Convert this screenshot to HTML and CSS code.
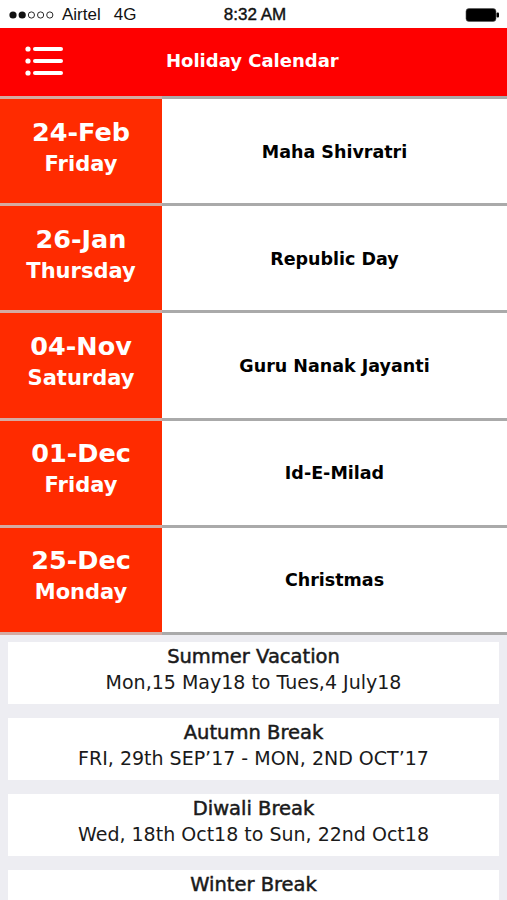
FILE: index.html
```html
<!DOCTYPE html>
<html>
<head>
<meta charset="utf-8">
<link rel="stylesheet" href="styles.css">
</head>
<body>
<div class="status">
  <div class="status-left">
    <svg class="signal" width="48" height="10" viewBox="0 0 48 10">
      <circle cx="4" cy="5" r="3.6" fill="#111"/>
      <circle cx="13.2" cy="5" r="3.6" fill="#111"/>
      <circle cx="22.4" cy="5" r="3.1" fill="none" stroke="#111" stroke-width="0.9"/>
      <circle cx="31.6" cy="5" r="3.1" fill="none" stroke="#111" stroke-width="0.9"/>
      <circle cx="40.8" cy="5" r="3.1" fill="none" stroke="#111" stroke-width="0.9"/>
    </svg>
    <span class="carrier">Airtel</span><span class="net">4G</span>
  </div>
  <div class="status-time">8:32 AM</div>
  <div class="status-right">
    <svg width="36" height="16" viewBox="0 0 36 16"><rect x="1" y="1.5" width="30" height="13" rx="3" fill="#000" stroke="#555" stroke-width="0.6"/><rect x="31.5" y="5.5" width="2.5" height="5" rx="1" fill="#000"/></svg>
  </div>
</div>
<header class="topbar">
  <svg class="menu" width="40" height="32" viewBox="0 0 40 32">
    <circle cx="3" cy="4" r="2.6" fill="#fff"/>
    <circle cx="3" cy="16" r="2.6" fill="#fff"/>
    <circle cx="3" cy="28" r="2.6" fill="#fff"/>
    <rect x="8" y="2" width="30" height="4" rx="2" fill="#fff"/>
    <rect x="8" y="14" width="30" height="4" rx="2" fill="#fff"/>
    <rect x="8" y="26" width="30" height="4" rx="2" fill="#fff"/>
  </svg>
  <div class="title">Holiday Calendar</div>
</header>
<div class="list">
  <div class="row"><div class="date"><div class="d">24-Feb</div><div class="w">Friday</div></div><div class="name">Maha Shivratri</div></div>
  <div class="row"><div class="date"><div class="d">26-Jan</div><div class="w">Thursday</div></div><div class="name">Republic Day</div></div>
  <div class="row"><div class="date"><div class="d">04-Nov</div><div class="w">Saturday</div></div><div class="name">Guru Nanak Jayanti</div></div>
  <div class="row"><div class="date"><div class="d">01-Dec</div><div class="w">Friday</div></div><div class="name">Id-E-Milad</div></div>
  <div class="row last"><div class="date"><div class="d">25-Dec</div><div class="w">Monday</div></div><div class="name">Christmas</div></div>
</div>
<div class="breaks">
  <div class="card"><div class="ct">Summer Vacation</div><div class="cs">Mon,15 May18 to Tues,4 July18</div></div>
  <div class="card"><div class="ct">Autumn Break</div><div class="cs">FRI, 29th SEP’17 - MON, 2ND OCT’17</div></div>
  <div class="card"><div class="ct">Diwali Break</div><div class="cs">Wed, 18th Oct18 to Sun, 22nd Oct18</div></div>
  <div class="card"><div class="ct">Winter Break</div><div class="cs">&nbsp;</div></div>
</div>
</body>
</html>
```
FILE: styles.css
```css
* { box-sizing: border-box; }
html, body { margin: 0; padding: 0; }
body {
  width: 507px;
  height: 900px;
  overflow: hidden;
  background: #ededf2;
  font-family: "DejaVu Sans", "Open Sans", sans-serif;
  color: #000;
}
.status {
  height: 28px;
  background: #fff;
  display: flex;
  align-items: center;
  padding: 2px 6px 0 9px;
  font-family: "Liberation Sans", Arial, sans-serif;
  font-size: 17px;
  color: #111;
}
.status-left { flex: 1; display: flex; align-items: center; }
.signal { display: block; margin-right: 5px; }
.net { margin-left: 13px; }
.status-time { flex: 1; text-align: center; -webkit-text-stroke: 0.4px #111; }
.status-right { flex: 1; display: flex; justify-content: flex-end; }
.status-right svg { display: block; }
.topbar {
  height: 68px;
  background: #fe0000;
  display: flex;
  align-items: center;
  padding-left: 25px;
  padding-bottom: 3px;
}
.menu { display: block; }
.title {
  color: #fff;
  font-weight: 700;
  font-size: 18px;
  margin-left: 101px;
}
.row {
  display: flex;
  height: 107.2px;
}
.row.last { height: 110.2px; }
.row .date {
  width: 162px;
  background: #ff2b00;
  border-top: 3px solid #d5aaa2;
  color: #fff;
  font-weight: 700;
  display: flex;
  flex-direction: column;
  align-items: center;
  justify-content: center;
  padding-bottom: 7px;
}
.row.last .date, .row.last .name { border-bottom: 3px solid #aaa; }
.row.last .date { border-bottom-color: #d5aaa2; }
.d { font-size: 25.5px; line-height: 32px; }
.w { font-size: 21px; line-height: 32px; }
.row .name {
  flex: 1;
  background: #fff;
  border-top: 3px solid #aaa;
  display: flex;
  align-items: center;
  justify-content: center;
  font-weight: 700;
  font-size: 17.5px;
  padding-top: 1px;
}
.breaks {
  padding: 7px 8px 0;
  display: flex;
  flex-direction: column;
  gap: 14px;
}
.card {
  background: #fff;
  height: 62px;
  display: flex;
  flex-direction: column;
  align-items: center;
  justify-content: center;
  padding-bottom: 5px;
  color: #1a1a1a;
}
.ct { font-size: 19.5px; line-height: 24px; -webkit-text-stroke: 0.5px #1a1a1a; }
.cs { font-size: 19px; line-height: 26px; }
```
